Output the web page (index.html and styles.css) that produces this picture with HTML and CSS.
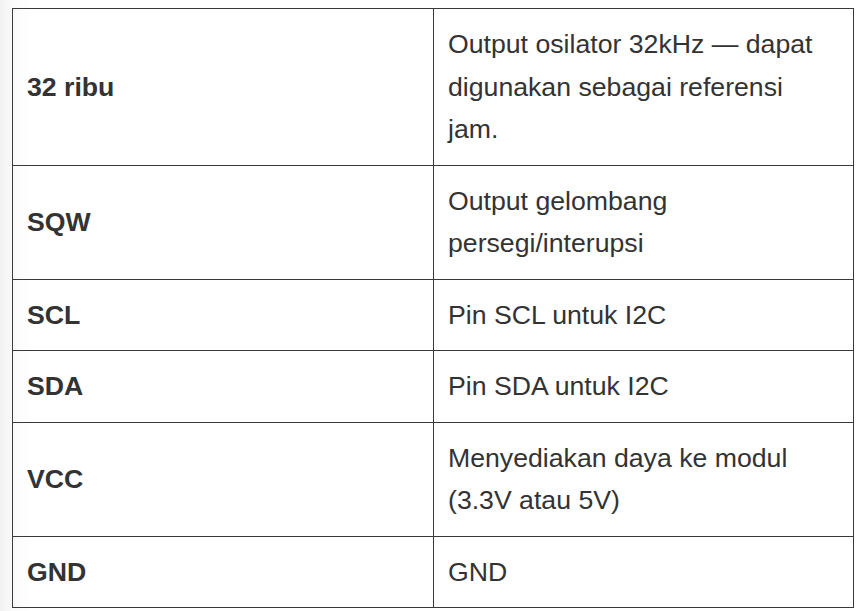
FILE: index.html
```html
<!DOCTYPE html>
<html lang="id">
<head>
<meta charset="utf-8">
<title>Pin DS3231</title>
<link rel="stylesheet" href="styles.css">
</head>
<body>
<table class="pins">
  <colgroup><col class="col-name"><col class="col-desc"></colgroup>
  <tbody>
    <tr><td class="name">32 ribu</td><td class="desc">Output osilator 32kHz — dapat digunakan sebagai referensi jam.</td></tr>
    <tr><td class="name">SQW</td><td class="desc">Output gelombang persegi/interupsi</td></tr>
    <tr><td class="name">SCL</td><td class="desc">Pin SCL untuk I2C</td></tr>
    <tr><td class="name">SDA</td><td class="desc">Pin SDA untuk I2C</td></tr>
    <tr><td class="name">VCC</td><td class="desc">Menyediakan daya ke modul (3.3V atau 5V)</td></tr>
    <tr><td class="name">GND</td><td class="desc">GND</td></tr>
  </tbody>
</table>
</body>
</html>
```
FILE: styles.css
```css
html, body {
  margin: 0;
  padding: 0;
}
body {
  background: linear-gradient(to right, #f1f1f1 0, #fafafa 12px, #ffffff 30px);
  padding: 8px 0 0 12px;
  font-family: "Liberation Sans", Arial, sans-serif;
  color: #333333;
  font-size: 26.67px;
  line-height: 42.5px;
}
.pins {
  border-collapse: collapse;
  width: 842px;
  table-layout: fixed;
}
.col-name { width: 421px; }
.pins td {
  border: 1px solid #3a3a3a;
  padding: 14px 15px 14px 14px;
  vertical-align: middle;
  text-align: left;
}
.pins td.name {
  font-weight: bold;
}
```
